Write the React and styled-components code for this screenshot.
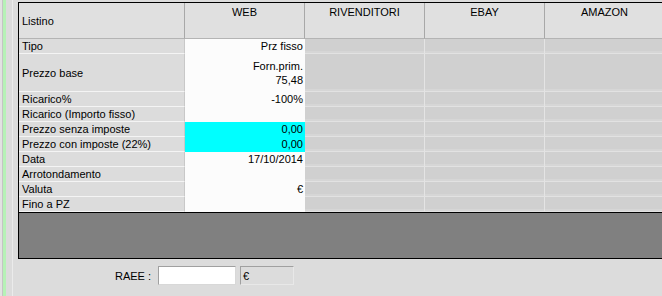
import React from 'react'
import styled, { createGlobalStyle } from 'styled-components'

const GlobalStyle = createGlobalStyle`
  html, body {
    margin: 0;
    padding: 0;
    background: #dcdcdc;
    overflow: hidden;
  }
  body {
    font-family: "Liberation Sans", Arial, sans-serif;
    font-size: 11px;
    color: #000;
  }
`

const channels = ['WEB', 'RIVENDITORI', 'EBAY', 'AMAZON']

const rows = [
  { label: 'Tipo', value: 'Prz fisso' },
  { label: 'Prezzo base', value: ['Forn.prim.', '75,48'], tall: true },
  { label: 'Ricarico%', value: '-100%' },
  { label: 'Ricarico (Importo fisso)', value: '' },
  { label: 'Prezzo senza imposte', value: '0,00', cyan: true },
  { label: 'Prezzo con imposte (22%)', value: '0,00', cyan: true },
  { label: 'Data', value: '17/10/2014' },
  { label: 'Arrotondamento', value: '' },
  { label: 'Valuta', value: '€' },
  { label: 'Fino a PZ', value: '' },
]

const Page = styled.div`
  display: flex;
  width: 662px;
  height: 296px;
  overflow: hidden;
`

const Gutter = styled.div`
  flex: 0 0 18px;
  display: flex;
  border-left: 2px solid #e2e2e2;
  box-sizing: border-box;
`

const Stripe = styled.div`
  width: 4px;
  border-left: 1px solid #c4c4c4;
  box-sizing: border-box;
  background: #b6f2b6;
`

const Rule = styled.div`
  width: 1px;
  margin-left: 6px;
  background: #ebebeb;
`

const Main = styled.div`
  flex: 1;
  display: flex;
  flex-direction: column;
  padding-top: 2px;
  min-width: 0;
`

const Frame = styled.div`
  border-top: 1px solid #000;
  border-left: 1px solid #000;
  border-bottom: 1px solid #000;
  width: 700px;
`

const Grid = styled.div`
  display: grid;
  grid-template-columns: 166px 120px 120px 120px 120px 1fr;
`

const HeadCell = styled.div`
  height: 36px;
  box-sizing: border-box;
  background: #e0e0e0;
  border-right: 1px solid #a8a8a8;
  border-bottom: 1px solid #b4b4b4;
  display: flex;
  flex-direction: column;
  align-items: ${p => (p.$label ? 'flex-start' : 'center')};
  justify-content: ${p => (p.$label ? 'center' : 'flex-start')};
  padding: ${p => (p.$label ? '0 3px' : '3px 0 0')};
`

const LabelCell = styled.div`
  height: ${p => (p.$tall ? 38 : 15)}px;
  box-sizing: border-box;
  background: #dcdcdc;
  border-right: 1px solid #c8c8c8;
  border-bottom: 1px solid #f4f4f4;
  padding: 0 3px;
  display: flex;
  align-items: center;
  white-space: nowrap;
`

const ValueCell = styled.div`
  height: ${p => (p.$tall ? 38 : 15)}px;
  box-sizing: border-box;
  background: ${p => (p.$cyan ? '#00ffff' : '#fcfcfc')};
  border-bottom: 1px solid ${p => (p.$cyan ? '#00ffff' : '#fcfcfc')};
  padding: 0 2px;
  display: flex;
  flex-direction: column;
  align-items: flex-end;
  justify-content: center;
  line-height: 14px;
`

const EmptyCell = styled.div`
  height: ${p => (p.$tall ? 38 : 15)}px;
  box-sizing: border-box;
  background: #d0d0d0;
  border-right: 1px solid #e4e4e4;
  border-bottom: 1px solid #e2e2e2;
  box-shadow: inset 0 -2px 0 #d6d6d6;
`

const DarkArea = styled.div`
  height: 45px;
  background: #808080;
  border-top: 1px solid #000;
`

const Footer = styled.div`
  display: flex;
  align-items: center;
  padding: 7px 0 0 97px;
`

const FieldLabel = styled.span`
  width: 43px;
  font-size: 11px;
`

const Input = styled.div`
  width: 78px;
  height: 19px;
  box-sizing: border-box;
  background: #fff;
  border: 1px solid #a0a0a0;
  border-right-color: #d8d8d8;
  border-bottom-color: #d8d8d8;
`

const Unit = styled.div`
  margin-left: 4px;
  width: 54px;
  height: 19px;
  box-sizing: border-box;
  background: #dcdcdc;
  border: 1px solid #a0a0a0;
  border-right-color: #e8e8e8;
  border-bottom-color: #e8e8e8;
  padding-left: 2px;
  display: flex;
  align-items: center;
`

export default function App() {
  return (
    <>
      <GlobalStyle />
      <Page>
        <Gutter>
          <Stripe />
          <Rule />
        </Gutter>
        <Main>
          <Frame>
            <Grid>
              <HeadCell $label>
                <span style={{ marginTop: 1 }}>Listino</span>
              </HeadCell>
              {channels.map(c => (
                <HeadCell key={c}>{c}</HeadCell>
              ))}
              <HeadCell />
              {rows.map(r => (
                <React.Fragment key={r.label}>
                  <LabelCell $tall={r.tall}>{r.label}</LabelCell>
                  <ValueCell $tall={r.tall} $cyan={r.cyan}>
                    {Array.isArray(r.value)
                      ? r.value.map(v => <span key={v}>{v}</span>)
                      : r.value}
                  </ValueCell>
                  <EmptyCell $tall={r.tall} />
                  <EmptyCell $tall={r.tall} />
                  <EmptyCell $tall={r.tall} />
                  <EmptyCell $tall={r.tall} />
                </React.Fragment>
              ))}
            </Grid>
            <DarkArea />
          </Frame>
          <Footer>
            <FieldLabel>RAEE :</FieldLabel>
            <Input />
            <Unit>€</Unit>
          </Footer>
        </Main>
      </Page>
    </>
  )
}
